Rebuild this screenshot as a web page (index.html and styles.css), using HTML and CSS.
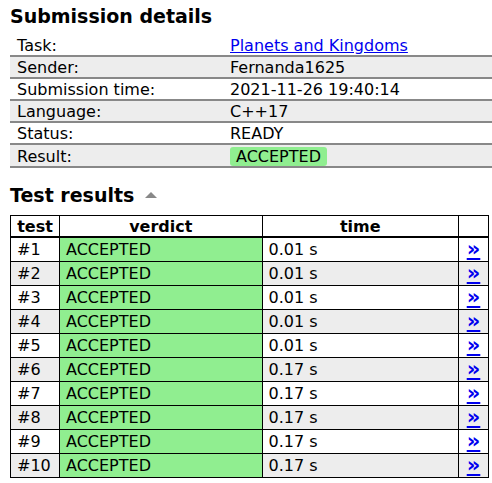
FILE: index.html
```html
<!DOCTYPE html>
<html>
<head>
<meta charset="utf-8">
<link rel="stylesheet" href="styles.css">
</head>
<body>
<div class="page">
  <h1 class="title">Submission details</h1>
  <table class="summary">
    <tr><td class="label">Task:</td><td><a href="#">Planets and Kingdoms</a></td></tr>
    <tr><td class="label">Sender:</td><td>Fernanda1625</td></tr>
    <tr><td class="label">Submission time:</td><td>2021-11-26 19:40:14</td></tr>
    <tr><td class="label">Language:</td><td>C++17</td></tr>
    <tr><td class="label">Status:</td><td>READY</td></tr>
    <tr><td class="label">Result:</td><td><span class="badge">ACCEPTED</span></td></tr>
  </table>
  <h2 class="title sub">Test results <span class="tri"></span></h2>
  <table class="tests">
    <colgroup><col class="c1"><col class="c2"><col class="c3"><col class="c4"></colgroup>
    <tr><th>test</th><th>verdict</th><th>time</th><th></th></tr>
    <tr><td>#1</td><td class="ok">ACCEPTED</td><td>0.01 s</td><td class="go"><a href="#">»</a></td></tr>
    <tr><td>#2</td><td class="ok">ACCEPTED</td><td>0.01 s</td><td class="go"><a href="#">»</a></td></tr>
    <tr><td>#3</td><td class="ok">ACCEPTED</td><td>0.01 s</td><td class="go"><a href="#">»</a></td></tr>
    <tr><td>#4</td><td class="ok">ACCEPTED</td><td>0.01 s</td><td class="go"><a href="#">»</a></td></tr>
    <tr><td>#5</td><td class="ok">ACCEPTED</td><td>0.01 s</td><td class="go"><a href="#">»</a></td></tr>
    <tr><td>#6</td><td class="ok">ACCEPTED</td><td>0.17 s</td><td class="go"><a href="#">»</a></td></tr>
    <tr><td>#7</td><td class="ok">ACCEPTED</td><td>0.17 s</td><td class="go"><a href="#">»</a></td></tr>
    <tr><td>#8</td><td class="ok">ACCEPTED</td><td>0.17 s</td><td class="go"><a href="#">»</a></td></tr>
    <tr><td>#9</td><td class="ok">ACCEPTED</td><td>0.17 s</td><td class="go"><a href="#">»</a></td></tr>
    <tr><td>#10</td><td class="ok">ACCEPTED</td><td>0.17 s</td><td class="go"><a href="#">»</a></td></tr>
  </table>
</div>
</body>
</html>
```
FILE: styles.css
```css
html, body {
  margin: 0;
  padding: 0;
  background: #fff;
}
body {
  font-family: "DejaVu Sans", Verdana, sans-serif;
  font-size: 16px;
  line-height: 19px;
  color: #000;
  overflow: hidden;
}
.page {
  padding: 5px 0 0 10px;
}
.title {
  font-size: 19px;
  line-height: 23px;
  font-weight: bold;
  margin: 0;
}
.sub {
  margin-top: 16px;
}
.tri {
  display: inline-block;
  width: 0;
  height: 0;
  border-left: 6px solid transparent;
  border-right: 6px solid transparent;
  border-bottom: 6px solid #888;
  margin-left: 4px;
  vertical-align: 4px;
}
a {
  color: #0000ee;
}
.summary {
  border-collapse: collapse;
  width: 482px;
  margin-top: 7px;
}
.summary td {
  padding: 1px 7px 0;
  border-bottom: 2px solid #888;
}
.summary tr:nth-child(even) td {
  background: #ededed;
}
.summary td.label {
  width: 199px;
}
.badge {
  display: inline-block;
  background: #90ee90;
  border-radius: 3px;
  padding: 0 6px;
  margin-top: 1px;
}
.tests {
  border-collapse: collapse;
  width: 479px;
  margin-top: 8px;
}
.c1 { width: 49px; }
.c2 { width: 203px; }
.c3 { width: 197px; }
.c4 { width: 30px; }
.tests th {
  border: 1px solid #000;
  border-bottom: 2px solid #000;
  padding: 1px 6px 0;
  font-weight: bold;
  text-align: center;
}
.tests td {
  border: 1px solid #000;
  padding: 2px 6px;
  text-align: left;
}
.tests tr:nth-child(odd) td {
  background: #ededed;
}
.tests td.ok {
  background: #90ee90 !important;
}
.tests td.go {
  text-align: center;
  padding: 2px 0;
  font-weight: bold;
  font-size: 21px;
  line-height: 19px;
}
```
